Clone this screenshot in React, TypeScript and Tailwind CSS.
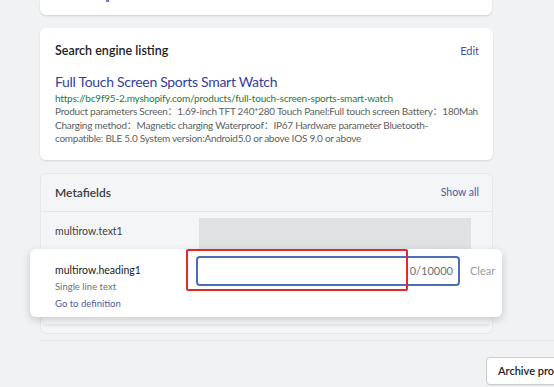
import React from 'react';

const font = { fontFamily: 'Lato, "Noto Sans CJK SC", sans-serif' };

export default function App() {
  return (
    <div
      className="w-[554px] h-[387px] overflow-hidden bg-[#f1f2f3] text-[#202223]"
      style={font}
    >
      <div className="w-[493px] pl-[40px] flex flex-col">
        {/* top card (cut off) */}
        <div className="h-[15px] bg-white rounded-b-[6px] shadow-[0_1px_2px_rgba(0,0,0,0.15)] w-[452px] relative">
          <div className="absolute left-[66px] top-0 w-[3px] h-[2px] bg-[#7b6fc9]" />
        </div>

        {/* search engine listing */}
        <div className="mt-[13px] h-[132px] bg-white rounded-[6px] shadow-[0_1px_2px_rgba(0,0,0,0.12)] pl-[15px] pr-[14px] pt-[14px]">
          <div className="flex items-center justify-between h-[18px]">
            <h2 className="text-[12.5px] font-semibold">Search engine listing</h2>
            <span className="text-[11px] text-[#3d52a8]">Edit</span>
          </div>
          <div className="mt-[13px] text-[14px] tracking-[-0.3px] leading-[18px] text-[#35409e]">
            Full Touch Screen Sports Smart Watch
          </div>
          <div className="text-[10px] tracking-[-0.2px] leading-[14px] text-[#237a3f] whitespace-nowrap">
            https://bc9f95-2.myshopify.com/products/full-touch-screen-sports-smart-watch
          </div>
          <div className="text-[10px] tracking-[-0.25px] leading-[13.5px] text-[#5c5f62] whitespace-nowrap flex flex-col">
            <span>Product parameters Screen：1.69-inch TFT 240*280 Touch Panel:Full touch screen Battery：180Mah</span>
            <span>Charging method：Magnetic charging Waterproof：IP67 Hardware parameter Bluetooth-</span>
            <span>compatible: BLE 5.0 System version:Android5.0 or above IOS 9.0 or above</span>
          </div>
        </div>

        {/* metafields */}
        <div className="mt-[13px] bg-[#f4f5f6] rounded-[6px] border border-[#e6e7e9] flex flex-col">
          <div className="h-[38px] flex items-center justify-between pl-[14px] pr-[13px] border-b border-[#e4e5e7]">
            <h2 className="text-[12px] font-semibold text-[#3a3c3e]">Metafields</h2>
            <span className="text-[10.5px] text-[#4a5ca8]">Show all</span>
          </div>
          <div className="h-[37px] flex pl-[14px] pt-[6px]">
            <span className="w-[144px] pt-[6px] text-[10.5px] text-[#3f4144]">multirow.text1</span>
            <div className="w-[272px] h-[31px] bg-[#dfe1e3]" />
          </div>

          {/* lifted row */}
          <div className="relative -ml-[11px] -mr-[10px] h-[68px] bg-white rounded-[6px] shadow-[0_3px_8px_rgba(0,0,0,0.18)] flex z-10">
            <div className="w-[166px] pl-[25px] pt-[13px] flex flex-col">
              <span className="text-[10.5px] leading-[17px] text-[#202223]">multirow.heading1</span>
              <span className="text-[9.5px] leading-[15px] text-[#6d7175]">Single line text</span>
              <span className="mt-[3px] text-[9.5px] leading-[14px] text-[#4a5ca8]">Go to definition</span>
            </div>
            <div className="pt-[7px] flex">
              <div className="w-[264px] h-[30px] border-2 border-[#4d6fb8] rounded-[4px] flex items-center justify-end pr-[5px]">
                <span className="text-[11px] text-[#6d7175]">0/10000</span>
              </div>
              <span className="ml-[10px] h-[30px] flex items-center text-[11px] text-[#9a9da0]">Clear</span>
            </div>
            <div className="absolute left-[156px] top-0 w-[222px] h-[42px] border-2 border-[#e3272b] rounded-[2px]" />
          </div>
          <div className="mx-[3px] h-[8px] bg-[#f7f8f8] border-b border-[#e8e9ea] shadow-[0_1px_2px_rgba(0,0,0,0.06)]" />
          <div className="h-[8px]" />
        </div>
      </div>

      <div className="ml-[40px] mt-[6px] border-t border-[#e3e4e6]" />
      <div className="pl-[486px] mt-[16px] flex">
        <button className="shrink-0 whitespace-nowrap h-[28px] px-[11px] bg-white border border-[#c9cccf] rounded-[4px] text-[11px] font-semibold text-[#202223] shadow-[0_1px_0_rgba(0,0,0,0.05)]">
          Archive product
        </button>
      </div>
    </div>
  );
}
